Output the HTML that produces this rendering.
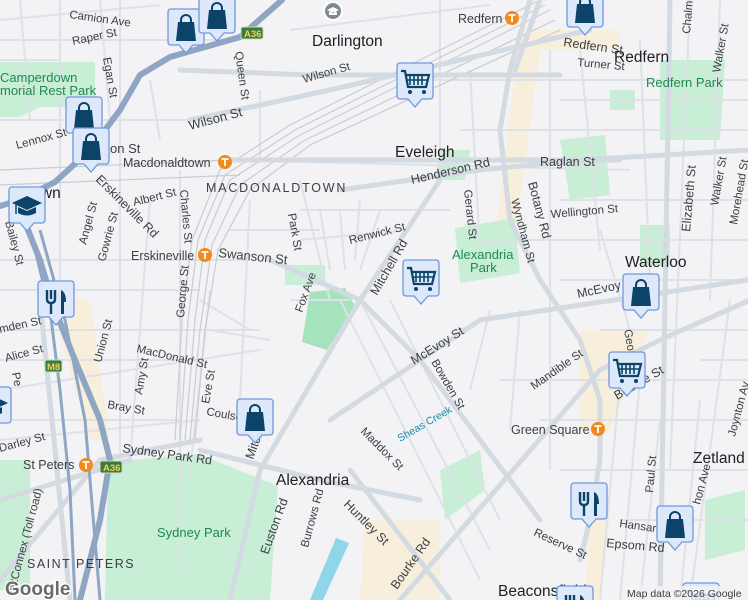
<!DOCTYPE html>
<html><head><meta charset="utf-8"><style>
html,body{margin:0;padding:0;width:748px;height:600px;overflow:hidden;background:#f3f2f4}
svg{display:block}
text{font-family:"Liberation Sans",sans-serif}
.s{font-size:11.5px;fill:#3c4043}
.n{font-size:15.5px;fill:#202124}
.p{font-size:13px;fill:#1e8a4e}
.t{font-size:12.5px;fill:#3c4043}
</style></head><body>
<svg width="748" height="600" viewBox="0 0 748 600" xmlns="http://www.w3.org/2000/svg">
<defs>
<symbol id="m" viewBox="0 0 38 54"><path d="M4 1h30a3 3 0 0 1 3 3v30a3 3 0 0 1-3 3h-8l-7 8-7-8H4a3 3 0 0 1-3-3V4a3 3 0 0 1 3-3z" fill="#dde8fb" stroke="#6f98dc" stroke-width="1.3"/></symbol>
<symbol id="bag" viewBox="0 0 38 54"><use href="#m"/><path d="M11 14h16l2 19H9z" fill="#0b4468"/><path d="M14 15v-3a5 5 0 0 1 10 0v3" fill="none" stroke="#0b4468" stroke-width="2"/></symbol>
<symbol id="cart" viewBox="0 0 38 54"><use href="#m"/><path d="M5 9h4l3 16h18l3-12H10" fill="none" stroke="#0b4468" stroke-width="2.2"/><path d="M14 14v9M18 14v9M22 14v9M26 14v9M11 18h20" stroke="#0b4468" stroke-width="1.6"/><circle cx="14" cy="30" r="2" fill="#0b4468"/><circle cx="28" cy="30" r="2" fill="#0b4468"/></symbol>
<symbol id="fork" viewBox="0 0 38 54"><use href="#m"/><path d="M10 10v9q0 4 4 4v11M14 10v9M18 10v9q0 4-4 4" fill="none" stroke="#0b4468" stroke-width="2.4"/><path d="M24 34V10q5 2 5 12h-2v12z" fill="#0b4468"/></symbol>
<symbol id="grad" viewBox="0 0 38 54"><use href="#m"/><path d="M4 17l15-7 15 7-15 7z" fill="#0b4468"/><path d="M10 21v6q9 5 18 0v-6l-9 4z" fill="#0b4468"/><path d="M8 19v9" stroke="#0b4468" stroke-width="1.5"/></symbol>
<symbol id="tr" viewBox="0 0 14 14"><circle cx="7" cy="7" r="7" fill="#f08a1c"/><path d="M3.5 4h7M7 4v7" stroke="#fff" stroke-width="1.8"/></symbol>
</defs>
<rect width="748" height="600" fill="#f3f2f4"/>
<!-- commercial -->
<g fill="#f7efdc"><path d="M520 30h100v20H540l-20 150-10 60h-20l10-60z"/><path d="M580 330h70l-40 100h-30z"/><path d="M590 520h20l-10 80h-15z"/><path d="M365 520h75v80h-80z"/><path d="M50 300h40l20 140H90z"/></g>
<!-- parks -->
<g fill="#c8eed6"><path d="M108 462l90-8 80 32-8 114H105z"/><path d="M455 228l60-10 5 55-60 10z"/><path d="M0 62h95v45H40l-20 10H0z"/><path d="M660 60h65l-5 80h-60z"/><path d="M285 265h40v20h-40z"/><path d="M560 140l45-5 5 60-40 5z"/><path d="M440 150h30l-5 30h-30z"/><path d="M640 225h30v40h-30z"/><path d="M0 460h30v130H0z"/><path d="M440 470l40-20 5 40-40 30z"/><path d="M705 500l40-10v60l-40 10z"/><path d="M610 90h25v20h-25z"/></g>
<path d="M310 292l35-4 10 18-28 44-25-8z" fill="#a5e3bd"/>
<path d="M336 538l13 5-26 57h-13z" fill="#8fd6e8"/>
<!-- minor roads -->
<g stroke="#dde2e8" stroke-width="2" fill="none">
<path d="M0 40h240M0 120h230M0 330h260M0 390l260-40M0 440l200-20M230 160l400 10M300 210h150M290 300h60M420 80h330M460 130h290M480 240h270M560 200h190M600 330h148M540 420h208M560 470h188M620 520h128M0 20l160-15M290 30l200-25M500 380h250"/>
<path d="M60 0v300M120 0v480M150 200l-20 260M180 170v400M210 290l-20 180M250 200l-10 200M300 180l30 120M340 300l140 280M360 300l130 250M390 300l110 220M440 0v180M470 70l10 180M550 50v420M580 50l20 200M640 40l10 240M690 0l-20 470M720 0l-10 300M730 300l-40 300M620 380l-20 220M640 380l-20 220"/>
<path d="M0 60h60M0 260h250M0 290h200M0 360h200M0 420h180M230 230h90M300 240l110-10M380 210l-20 60M320 210l10 60M340 210l5 60M360 200l-5 60M560 100h190M560 280h188M490 310l-20 80M520 310l-10 120M600 230l30 100M700 360h48M660 420l-20 180M700 400l-20 200M100 0l10 120M20 0l10 120M150 80l10 60M260 90v70M200 300l50 30M210 330l60 10"/>
</g>
<!-- rail -->
<g stroke="#c9ccd2" stroke-width="1.2" fill="none">
<path d="M550 10L300 135 230 180 205 240 195 320 185 440"/><path d="M555 20L305 140 240 185 212 245 200 330 190 440"/><path d="M545 5L295 130 225 175 198 240 188 320 180 440"/><path d="M560 30L310 145 250 190 218 250 205 330 195 440"/><path d="M540 0L290 125 220 170 192 240 182 320 175 440"/>
<path d="M230 160L0 170M240 175L0 185"/>
</g>
<!-- major light roads -->
<g stroke="#d3dae2" stroke-width="5" fill="none" stroke-linecap="round">
<path d="M530 0l-20 70-10 60 10 90 30 60 40 60 20 60 0 60-10 60-10 40"/>
<path d="M540 0l-25 70"/>
<path d="M440 180L360 300 260 470 230 600"/>
<path d="M330 420L480 320 748 280"/>
<path d="M200 450l120 30 100 20M0 500l130-40"/>
<path d="M270 260l90 40 60 60 60 80 60 80"/>
<path d="M230 160h390M340 190l140-20 100-10 168-10"/>
<path d="M0 580l100-120 100-20"/>
<path d="M350 470l100 130M400 600l200-230 60-30 90-40"/>
<path d="M670 0l-10 600M40 300l30 300"/>
<path d="M180 70l130 5 250 0"/>
<path d="M190 120l140-30 260-60"/>
</g>
<!-- highways -->
<g stroke="#8ea6c3" stroke-width="6" fill="none" stroke-linecap="round">
<path d="M282 0L240 37 170 57 140 75 120 110 90 150 55 182 20 200 0 206"/>
<path d="M20 210L40 260 55 310 75 360 100 420 110 460 100 520 80 600"/>
</g>
<g stroke="#8ea6c3" stroke-width="3" fill="none"><path d="M30 230l20 80 10 80 10 100 5 110"/><path d="M40 230l25 90 20 100 15 180"/></g>
<!-- badges -->
<g font-size="9.5" font-weight="bold"><rect x="241" y="27" width="22" height="12" rx="2" fill="#3a7d3a" stroke="#c8e0c0"/><text x="244" y="37" fill="#f2d060">A36</text>
<rect x="45" y="360" width="17" height="12" rx="2" fill="#3a7d3a" stroke="#c8e0c0"/><text x="47" y="370" fill="#f2d060">M8</text>
<rect x="100" y="461" width="22" height="12" rx="2" fill="#3a7d3a" stroke="#c8e0c0"/><text x="103" y="471" fill="#f2d060">A36</text></g>
<!-- Darlington poi -->
<circle cx="333" cy="11" r="9" fill="#7c8894" stroke="#fff" stroke-width="2"/><path d="M327 10l6-3 6 3-6 3z M329 12v3h8v-3" fill="#fff"/>
<!-- labels -->
<text class="n" x="312" y="46">Darlington</text>
<text class="n" x="395" y="157">Eveleigh</text>
<text class="n" x="614" y="62">Redfern</text>
<text class="n" x="625" y="267">Waterloo</text>
<text class="n" x="693" y="463">Zetland</text>
<text class="n" x="276" y="485">Alexandria</text>
<text class="n" x="498" y="596">Beaconsfield</text>
<text class="n" x="28" y="198">town</text>
<text x="206" y="192" font-size="12.5" fill="#3c4043" letter-spacing="1.8">MACDONALDTOWN</text>
<text x="27" y="568" font-size="12.5" fill="#3c4043" letter-spacing="1.5">SAINT PETERS</text>
<text class="p" x="0" y="82">Camperdown</text><text class="p" x="0" y="95">morial Rest Park</text>
<text class="p" x="646" y="87">Redfern Park</text>
<text class="p" x="452" y="259">Alexandria</text><text class="p" x="470" y="272">Park</text>
<text class="t" x="123" y="167">Macdonaldtown</text><use href="#tr" x="218" y="155" width="14" height="14"/>
<text class="t" x="131" y="260">Erskineville</text><use href="#tr" x="198" y="248" width="14" height="14"/>
<text class="t" x="458" y="23">Redfern</text><use href="#tr" x="505" y="11" width="14" height="14"/>
<text class="t" x="511" y="434">Green Square</text><use href="#tr" x="591" y="422" width="14" height="14"/>
<text class="t" x="23" y="469">St Peters</text><use href="#tr" x="79" y="458" width="14" height="14"/>
<text class="p" x="157" y="537">Sydney Park</text>
<g class="s">
<text x="69" y="18" transform="rotate(8 69 18)">Camion Ave</text>
<text x="73" y="45" transform="rotate(-12 73 45)">Raper St</text>
<text x="103" y="58" transform="rotate(80 103 58)">Egan St</text>
<text x="235" y="52" transform="rotate(82 235 52)">Queen St</text>
<text x="304" y="83" transform="rotate(-16 304 83)">Wilson St</text>
<text x="190" y="130" transform="rotate(-15 190 130)" font-size="13">Wilson St</text>
<text x="17" y="149" transform="rotate(-15 17 149)">Lennox St</text>
<text x="110" y="153" font-size="13">on St</text>
<text x="134" y="206" transform="rotate(-14 134 206)">Albert St</text>
<text x="180" y="190" transform="rotate(85 180 190)">Charles St</text>
<text x="95" y="180" transform="rotate(45 95 180)" font-size="12.5">Erskineville Rd</text>
<text x="86" y="245" transform="rotate(-75 86 245)">Angel St</text>
<text x="105" y="262" transform="rotate(-75 105 262)">Gowrie St</text>
<text x="5" y="222" transform="rotate(75 5 222)">Bailey St</text>
<text x="218" y="257" transform="rotate(6 218 257)" font-size="13">Swanson St</text>
<text x="288" y="214" transform="rotate(80 288 214)">Park St</text>
<text x="350" y="244" transform="rotate(-14 350 244)">Renwick St</text>
<text x="377" y="296" transform="rotate(-60 377 296)" font-size="12.5">Mitchell Rd</text>
<text x="302" y="313" transform="rotate(-70 302 313)">Fox Ave</text>
<text x="414" y="365" transform="rotate(-32 414 365)" font-size="12.5">McEvoy St</text>
<text x="578" y="298" transform="rotate(-12 578 298)" font-size="12.5">McEvoy</text>
<text x="431" y="362" transform="rotate(60 431 362)">Bowden St</text>
<text x="534" y="390" transform="rotate(-35 534 390)">Mandible St</text>
<text x="400" y="442" transform="rotate(-30 400 442)" font-size="10.5" fill="#1a8ca8">Sheas Creek</text>
<text x="360" y="432" transform="rotate(45 360 432)">Maddox St</text>
<text x="343" y="505" transform="rotate(45 343 505)" font-size="12.5">Huntley St</text>
<text x="397" y="590" transform="rotate(-55 397 590)" font-size="12.5">Bourke Rd</text>
<text x="308" y="548" transform="rotate(-75 308 548)">Burrows Rd</text>
<text x="268" y="555" transform="rotate(-70 268 555)" font-size="12.5">Euston Rd</text>
<text x="122" y="452" transform="rotate(8 122 452)" font-size="12.5">Sydney Park Rd</text>
<text x="253" y="460" transform="rotate(-70 253 460)" font-size="12.5">Mitchell Rd</text>
<text x="206" y="415" transform="rotate(10 206 415)">Coulson</text>
<text x="209" y="404" transform="rotate(-80 209 404)">Eve St</text>
<text x="136" y="352" transform="rotate(13 136 352)">MacDonald St</text>
<text x="142" y="395" transform="rotate(-80 142 395)">Amy St</text>
<text x="107" y="408" transform="rotate(10 107 408)">Bray St</text>
<text x="101" y="363" transform="rotate(-75 101 363)">Union St</text>
<text x="184" y="318" transform="rotate(-85 184 318)">George St</text>
<text x="0" y="333" transform="rotate(-12 0 333)">mden St</text>
<text x="6" y="362" transform="rotate(-15 6 362)">Alice St</text>
<text x="0" y="452" transform="rotate(-15 0 452)">Darley St</text>
<text x="12" y="373" transform="rotate(80 12 373)">Pe</text>
<text x="14" y="595" transform="rotate(-75 14 595)">estConnex (Toll road)</text>
<text x="412" y="184" transform="rotate(-13 412 184)" font-size="12.5">Henderson Rd</text>
<text x="540" y="166" font-size="12.5">Raglan St</text>
<text x="551" y="218" transform="rotate(-5 551 218)">Wellington St</text>
<text x="464" y="190" transform="rotate(84 464 190)">Gerard St</text>
<text x="511" y="200" transform="rotate(75 511 200)">Wyndham St</text>
<text x="528" y="183" transform="rotate(75 528 183)" font-size="12.5">Botany Rd</text>
<text x="563" y="46" transform="rotate(8 563 46)" font-size="12.5">Redfern St</text>
<text x="577" y="66" transform="rotate(5 577 66)">Turner St</text>
<text x="690" y="34" transform="rotate(-85 690 34)">Chalme</text>
<text x="720" y="73" transform="rotate(-80 720 73)">Walker St</text>
<text x="690" y="232" transform="rotate(-85 690 232)" font-size="12.5">Elizabeth St</text>
<text x="718" y="206" transform="rotate(-80 718 206)">Walker St</text>
<text x="737" y="225" transform="rotate(-80 737 225)">Morehead St</text>
<text x="624" y="330" transform="rotate(80 624 330)">Geor</text>
<text x="617" y="400" transform="rotate(-30 617 400)" font-size="12.5">Bourke St</text>
<text x="735" y="437" transform="rotate(-75 735 437)">Joynton Av</text>
<text x="653" y="493" transform="rotate(-85 653 493)">Paul St</text>
<text x="619" y="527" transform="rotate(8 619 527)">Hansard</text>
<text x="606" y="547" transform="rotate(5 606 547)" font-size="12.5">Epsom Rd</text>
<text x="533" y="535" transform="rotate(25 533 535)">Reserve St</text>
<text x="700" y="505" transform="rotate(-75 700 505)">hon Ave</text>
</g>
<!-- markers -->
<use href="#bag" x="167" y="8" width="38" height="54"/>
<use href="#bag" x="198" y="-4" width="38" height="54"/>
<use href="#bag" x="566" y="-10" width="38" height="54"/>
<use href="#cart" x="396" y="62" width="38" height="54"/>
<use href="#bag" x="65" y="96" width="38" height="54"/>
<use href="#bag" x="72" y="127" width="38" height="54"/>
<use href="#grad" x="8" y="186" width="38" height="54"/>
<use href="#fork" x="37" y="280" width="38" height="54"/>
<use href="#cart" x="402" y="259" width="38" height="54"/>
<use href="#bag" x="622" y="273" width="38" height="54"/>
<use href="#cart" x="608" y="351" width="38" height="54"/>
<use href="#bag" x="236" y="398" width="38" height="54"/>
<use href="#fork" x="570" y="482" width="38" height="54"/>
<use href="#bag" x="656" y="505" width="38" height="54"/>
<use href="#fork" x="556" y="585" width="38" height="54"/>
<use href="#cart" x="682" y="582" width="38" height="54"/>
<use href="#grad" x="-26" y="386" width="38" height="54"/>
<!-- footer -->
<rect x="624" y="586" width="124" height="14" fill="#f3f2f4" opacity="0.85"/>
<text x="627" y="597" font-size="10.5" fill="#3c4043">Map data ©2026 Google</text>
<text x="5" y="595" font-size="19" font-weight="bold" fill="#6a6a6a" stroke="#fff" stroke-width="2.5" paint-order="stroke">Google</text>
</svg>
</body></html>
